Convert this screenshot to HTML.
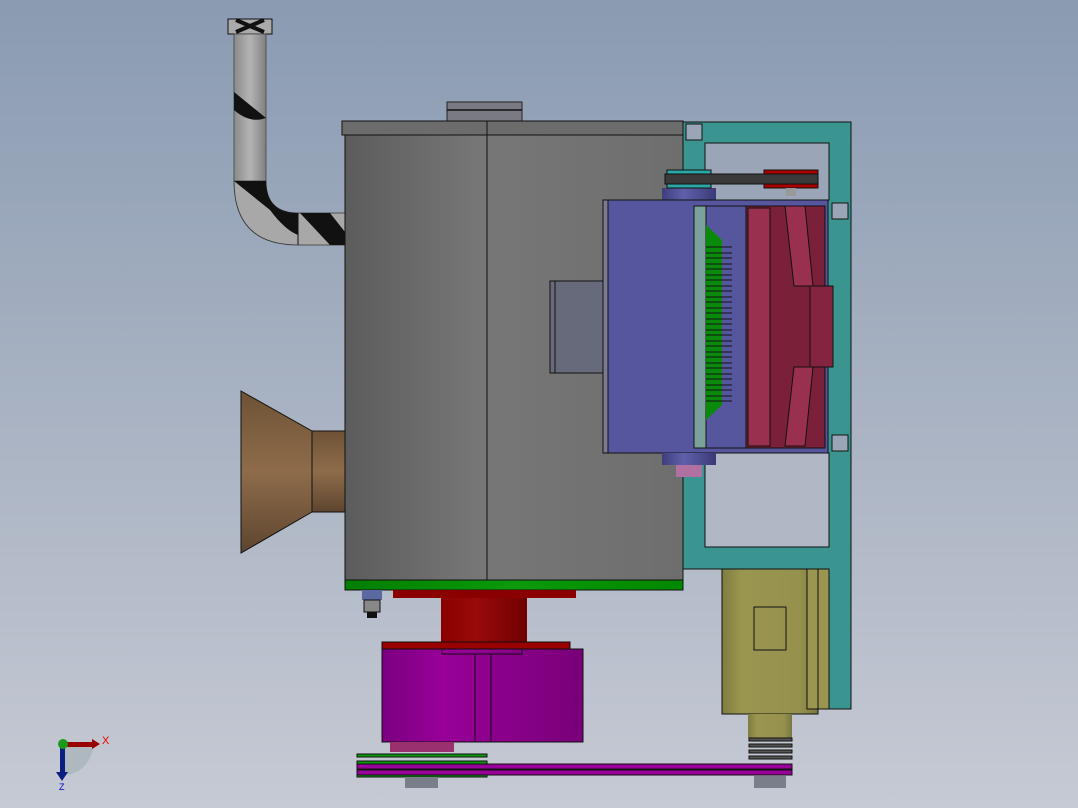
<!DOCTYPE html>
<html><head><meta charset="utf-8"><style>
html,body{margin:0;padding:0;width:1078px;height:808px;overflow:hidden}
svg{display:block}
</style></head><body>
<svg width="1078" height="808" viewBox="0 0 1078 808" xmlns="http://www.w3.org/2000/svg" font-family="Liberation Sans, sans-serif">
<defs>
<linearGradient id="bg" x1="0" y1="0" x2="0" y2="1"><stop offset="0" stop-color="#8a9bb2"/><stop offset="0.5" stop-color="#a8b2c2"/><stop offset="1" stop-color="#c6cad4"/></linearGradient>
<linearGradient id="body" x1="0" x2="1"><stop offset="0" stop-color="#5c5c5c"/><stop offset="0.4" stop-color="#777"/><stop offset="1" stop-color="#6e6e6e"/></linearGradient>
<linearGradient id="pipe" x1="0" x2="1"><stop offset="0" stop-color="#8a8a8a"/><stop offset="0.5" stop-color="#b4b4b4"/><stop offset="1" stop-color="#808080"/></linearGradient>
<linearGradient id="pipeh" x1="0" y1="0" x2="0" y2="1"><stop offset="0" stop-color="#8a8a8a"/><stop offset="0.5" stop-color="#b4b4b4"/><stop offset="1" stop-color="#808080"/></linearGradient>
<linearGradient id="brown" x1="0" y1="0" x2="0" y2="1"><stop offset="0" stop-color="#6e5236"/><stop offset="0.5" stop-color="#8e6c4a"/><stop offset="1" stop-color="#5e4530"/></linearGradient>
<linearGradient id="mag" x1="0" x2="1"><stop offset="0" stop-color="#7a0080"/><stop offset="0.3" stop-color="#980098"/><stop offset="1" stop-color="#780078"/></linearGradient>
<linearGradient id="red" x1="0" x2="1"><stop offset="0" stop-color="#8a0000"/><stop offset="0.4" stop-color="#9a0a0a"/><stop offset="1" stop-color="#700000"/></linearGradient>
<linearGradient id="olive" x1="0" x2="1"><stop offset="0" stop-color="#7e7c40"/><stop offset="0.2" stop-color="#9a9650"/><stop offset="0.8" stop-color="#96924e"/><stop offset="1" stop-color="#7a7840"/></linearGradient>
<linearGradient id="green" x1="0" x2="1"><stop offset="0" stop-color="#007e00"/><stop offset="0.5" stop-color="#0a9a0a"/><stop offset="1" stop-color="#008800"/></linearGradient>
<linearGradient id="hub" x1="0" x2="1"><stop offset="0" stop-color="#3e3e7e"/><stop offset="0.4" stop-color="#6060aa"/><stop offset="1" stop-color="#3a3a78"/></linearGradient>
</defs>
<rect width="1078" height="808" fill="url(#bg)"/>

<!-- pipe -->
<rect x="228" y="19" width="44" height="15" fill="#aaa" stroke="#111"/>
<path d="M236 20 L264 32 M236 32 L264 20" stroke="#111" stroke-width="4"/>
<rect x="234" y="34" width="32" height="148" fill="url(#pipe)" stroke="#444" stroke-width="0.8"/>
<path d="M234 92 L266 118 Q250 124 234 110 Z" fill="#111"/>
<path d="M234 181 L266 181 Q266 213 298 213 L345 213 L345 245 L298 245 Q234 245 234 181 Z" fill="#a8a8a8" stroke="#333" stroke-width="0.8"/>
<path d="M234 181 L270 210 Q285 230 298 235 L298 213 Q266 213 266 181 Z" fill="#111"/>
<path d="M300 213 L330 245 L345 245 L345 232 L330 213 Z" fill="#111"/>
<line x1="298" y1="213" x2="298" y2="245" stroke="#111"/>

<!-- funnel -->
<polygon points="241,391 312,431 312,512 241,553" fill="url(#brown)" stroke="#111"/>
<path d="M312 431 L345 431 Q352 472 345 512 L312 512 Z" fill="url(#brown)" stroke="#111"/>

<!-- body -->
<rect x="447" y="102" width="75" height="20" fill="#7a7a82" stroke="#222"/>
<line x1="447" y1="110" x2="522" y2="110" stroke="#111" stroke-width="1.5"/>
<rect x="345" y="135" width="338" height="445" fill="url(#body)" stroke="#111"/>
<rect x="342" y="121" width="341" height="14" fill="#6c6c6c" stroke="#111"/>
<line x1="487" y1="121" x2="487" y2="590" stroke="#111"/>
<rect x="345" y="580" width="338" height="10" fill="url(#green)" stroke="#111"/>
<rect x="550" y="281" width="53" height="92" fill="#666a7a" stroke="#111"/>
<line x1="555" y1="281" x2="555" y2="373" stroke="#111"/>

<!-- teal frame -->
<path d="M683 122 H851 V709 H829 V569 H705 V569 H683 Z" fill="#3a9490" stroke="#111"/>
<rect x="705" y="143" width="124" height="57" fill="#9aa6b8" stroke="#111"/>
<rect x="705" y="453" width="124" height="94" fill="#b0b8c6" stroke="#111"/>
<rect x="686" y="124" width="16" height="16" fill="#9aa6b8" stroke="#111"/>
<rect x="832" y="203" width="16" height="16" fill="#9aa6b8" stroke="#111"/>
<rect x="832" y="435" width="16" height="16" fill="#9aa6b8" stroke="#111"/>

<!-- top belt -->
<rect x="662" y="188" width="54" height="12" fill="url(#hub)"/>
<rect x="667" y="170" width="44" height="18" fill="#2aa8a8" stroke="#111"/>
<rect x="665" y="174" width="153" height="10" fill="#3a3a3a" stroke="#111"/>
<rect x="764" y="170" width="54" height="4" fill="#a00" stroke="#111"/>
<rect x="764" y="184" width="54" height="4" fill="#a00" stroke="#111"/>
<rect x="786" y="188" width="10" height="8" fill="#999"/>

<!-- blue box -->
<rect x="603" y="200" width="225" height="253" fill="#56569e" stroke="#111"/>
<rect x="603" y="200" width="5" height="253" fill="#7a7a90" stroke="#111"/>
<rect x="694" y="206" width="131" height="242" fill="none" stroke="#111"/>
<rect x="694" y="206" width="12" height="242" fill="#7aa29a" stroke="#111"/>
<polygon points="706,225 722,240 722,405 706,420" fill="#0a8a0a"/>
<g stroke="#111" stroke-width="1">
<path d="M706 247H732M706 253H732M706 258H732M706 264H732M706 269H732M706 275H732M706 280H732M706 286H732M706 291H732M706 297H732M706 302H732M706 308H732M706 313H732M706 319H732M706 324H732M706 330H732M706 335H732M706 341H732M706 346H732M706 352H732M706 357H732M706 363H732M706 368H732M706 374H732M706 379H732M706 385H732M706 390H732M706 396H732M706 401H732"/>
</g>
<rect x="746" y="206" width="79" height="242" fill="#7a2038" stroke="#111"/>
<rect x="748" y="208" width="22" height="238" fill="#9a3050" stroke="#111"/>
<polygon points="785,206 805,206 813,286 794,286" fill="#9a3050" stroke="#111"/>
<polygon points="794,367 813,367 805,446 785,446" fill="#9a3050" stroke="#111"/>
<rect x="810" y="286" width="23" height="81" fill="#842440" stroke="#111"/>
<rect x="662" y="453" width="54" height="12" fill="url(#hub)"/>
<rect x="676" y="465" width="26" height="12" fill="#b070a0"/>

<!-- motor -->
<rect x="722" y="569" width="96" height="145" fill="url(#olive)" stroke="#111"/>
<rect x="807" y="569" width="11" height="140" fill="#9a9650" stroke="#111"/>
<rect x="818" y="569" width="11" height="140" fill="#9a9650" stroke="#111"/>
<rect x="754" y="607" width="32" height="43" fill="none" stroke="#111"/>
<rect x="748" y="714" width="44" height="24" fill="url(#olive)"/>
<g fill="#555" stroke="#111"><rect x="749" y="738" width="43" height="3"/><rect x="749" y="744" width="43" height="3"/><rect x="749" y="750" width="43" height="3"/><rect x="749" y="756" width="43" height="3"/></g>
<rect x="754" y="776" width="32" height="12" fill="#7a7e8a"/>

<!-- lower assembly -->
<rect x="362" y="590" width="20" height="10" fill="#5a6aa0"/>
<rect x="364" y="600" width="16" height="12" fill="#888" stroke="#111"/>
<rect x="367" y="612" width="10" height="6" fill="#111"/>
<rect x="393" y="590" width="183" height="8" fill="#8a0000"/>
<rect x="441" y="598" width="86" height="44" fill="url(#red)"/>
<rect x="382" y="642" width="188" height="7" fill="#900" stroke="#111"/>
<rect x="382" y="649" width="201" height="93" fill="url(#mag)" stroke="#111"/>
<rect x="442" y="649" width="80" height="5" fill="none" stroke="#111"/>
<line x1="475" y1="654" x2="475" y2="742" stroke="#111"/>
<line x1="491" y1="654" x2="491" y2="742" stroke="#111"/>
<rect x="390" y="742" width="64" height="10" fill="#9a306e"/>
<rect x="357" y="754" width="130" height="3" fill="#0a9a0a" stroke="#111"/>
<rect x="357" y="761" width="130" height="3" fill="#0a9a0a" stroke="#111"/>
<rect x="357" y="775" width="130" height="2" fill="#0a9a0a" stroke="#111"/>
<rect x="357" y="764" width="435" height="5" fill="#990099" stroke="#111"/>
<rect x="357" y="770" width="435" height="5" fill="#990099" stroke="#111"/>
<rect x="405" y="777" width="33" height="11" fill="#7a7e8a"/>

<!-- axis triad -->
<path d="M63 745 A30 30 0 0 1 93 745 L63 745 Z" fill="#999" opacity="0"/>
<path d="M63 745 L93 745 A30 30 0 0 1 63 775 Z" fill="#9aa" opacity="0.5"/>
<rect x="63" y="742" width="30" height="5" fill="#900"/>
<polygon points="92,739 100,744 92,749" fill="#900"/>
<rect x="60" y="745" width="5" height="28" fill="#0a2080"/>
<polygon points="56,772 62,781 68,772" fill="#0a2080"/>
<circle cx="63" cy="744" r="5" fill="#1a9a1a"/>
<text x="102" y="744" font-size="11" fill="#e00">X</text>
<text x="59" y="790" font-size="9" fill="#00c">Z</text>
</svg>
</body></html>
